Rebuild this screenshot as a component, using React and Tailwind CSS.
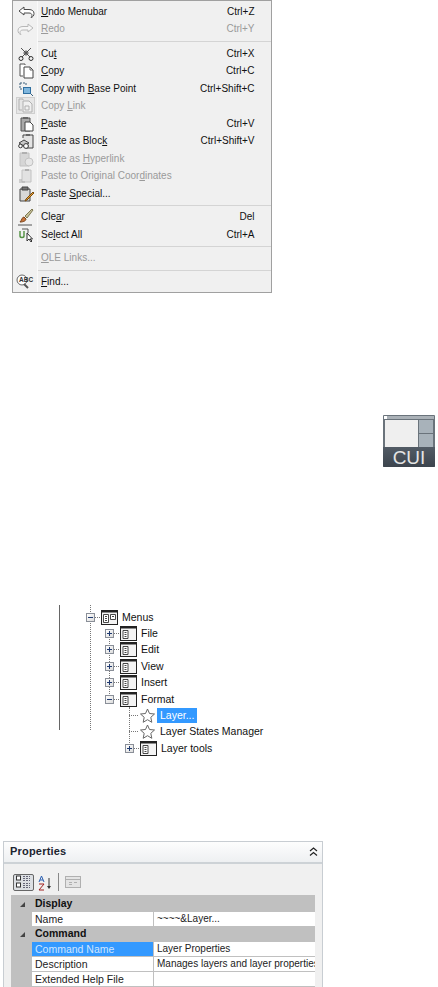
import React from "react";

const F = "font-['Liberation_Sans',Arial,sans-serif]";

const I = ({ children, w = 18, h = 16, dim }) => (
  <svg width={w} height={h} viewBox={`0 0 ${w} ${h}`} fill="none" className={dim ? "opacity-40" : ""}>{children}</svg>
);

const icons = {
  undo: (
    <I>
      <path d="M7 3 2 7l5 4V9h5c2 0 3 1 3 2.500 0 1-.5 1.500-1 2 2-.5 3-2 3-4 0-2.500-2-4-5-4H7z" stroke="#4a4a4a" fill="#fff" />
    </I>
  ),
  redo: (
    <I>
      <path d="M11 3l5 4-5 4V9H6c-2 0-3 1-3 2.500 0 1 .5 1.500 1 2-2-.5-3-2-3-4 0-2.500 2-4 5-4h5z" stroke="#b8b8b8" fill="#f6f6f6" />
    </I>
  ),
  cut: (
    <I>
      <path d="M4 2l9 9M14 2l-9 9" stroke="#555" />
      <circle cx="9" cy="7" r="2" stroke="#444" />
      <circle cx="4" cy="12.500" r="2" stroke="#333" />
      <circle cx="14" cy="12.500" r="2" stroke="#333" />
    </I>
  ),
  copy: (
    <I>
      <path d="M8 2V1H3v12h3" stroke="#555" fill="#fff" />
      <path d="M7 4h6l3 3v8H7z" stroke="#444" fill="#fff" />
      <path d="M13 4v3h3" stroke="#666" />
    </I>
  ),
  copyBase: (
    <I>
      <path d="M3 2h6v3M3 2v6h2" stroke="#3a5f7a" strokeDasharray="2 1" />
      <rect x="6.500" y="6.500" width="7" height="6" fill="#7fb6dd" stroke="#2f6fa0" />
      <path d="M14 13l2 2" stroke="#3a5f7a" />
    </I>
  ),
  copyLink: (
    <I w={20} h={18}>
      <rect x=".5" y=".5" width="18" height="16" fill="#e6e6e6" stroke="#cfcfcf" />
      <path d="M7 3V2H3v11h3" stroke="#b0b0b0" />
      <path d="M7 4h6l3 3v8H7z" stroke="#b0b0b0" fill="#f0f0f0" />
      <path d="M9 9h4v4H9z" stroke="#b0b0b0" />
    </I>
  ),
  paste: (
    <I>
      <path d="M4 2h9v13H4z" fill="#a9a9a9" stroke="#555" />
      <path d="M6 1h5v2H6z" fill="#666" />
      <path d="M8 6h5l3 3v6H8z" stroke="#444" fill="#fff" />
    </I>
  ),
  pasteBlock: (
    <I>
      <path d="M6 5V2h10v13H9" stroke="#444" fill="#e4e4e4" />
      <path d="M9 1h4v2H9z" fill="#666" />
      <path d="M2 10l5-3 5 3-5 3z" fill="#c8c8c8" stroke="#444" />
      <circle cx="3.500" cy="13" r="1.800" stroke="#333" fill="#fff" />
      <circle cx="9" cy="13" r="2.400" stroke="#333" fill="#fff" />
    </I>
  ),
  pasteLink: (
    <I>
      <path d="M3 2h9v13H3z" fill="#d6d6d6" stroke="#c2c2c2" />
      <path d="M5 1h5v2H5z" fill="#b0b0b0" />
      <circle cx="12" cy="11" r="4" fill="#e6e6e6" stroke="#c2c2c2" />
    </I>
  ),
  pasteOrig: (
    <I>
      <path d="M5 2h9v12H5z" fill="#e2e2e2" stroke="#c2c2c2" />
      <path d="M8 1h4v2H8z" fill="#b0b0b0" />
      <path d="M2 12h3M2 14h6" stroke="#aaa" />
    </I>
  ),
  pasteSpecial: (
    <I>
      <path d="M3 3h10v12H3z" fill="#d8d8d8" stroke="#444" />
      <path d="M5 1h6v3H5z" fill="#777" stroke="#444" />
      <path d="M9 13l7-7 1 1-7 7-2 1z" fill="#e8a23a" stroke="#7a4d10" />
    </I>
  ),
  clear: (
    <I h={18}>
      <path d="M15 1 8 8l2 2 6-8z" fill="#c6c09a" stroke="#7d7850" />
      <path d="M7 9c-2 0-2 3-4 5 3 0 6-1 6-3z" fill="#c7733a" stroke="#7a431a" />
      <path d="M1 17h14" stroke="#555" />
    </I>
  ),
  select: (
    <I>
      <path d="M3 4v5c0 2 4 2 4 0V4" stroke="#4f8f3f" strokeWidth="1.400" />
      <path d="M5 2h6v4" stroke="#555" />
      <path d="M10 6v8l2-2 2 3 1-1-2-2h2.500z" fill="#fff" stroke="#333" />
    </I>
  ),
  find: (
    <I w={20}>
      <circle cx="6" cy="6" r="5" stroke="#666" fill="#fff" />
      <text x="3" y="8" fontSize="6.500" fontWeight="700" fontFamily="Liberation Sans, sans-serif" fill="#333">ABC</text>
      <path d="M8 10l4 4" stroke="#555" strokeWidth="2" />
    </I>
  ),
};

const Row = ({ icon, label, shortcut, dim }) => (
  <div className={`flex h-[17.5px] items-center ${dim ? "text-[#9a9a9a]" : "text-[#111]"}`}>
    <div className="flex w-[25px] shrink-0 items-center justify-center">{icons[icon]}</div>
    <div className="ml-[3px] flex-1 whitespace-nowrap">{label}</div>
    <div className="mr-[16.5px] whitespace-nowrap">{shortcut}</div>
  </div>
);

const Sep = ({ h = 7 }) => (
  <div className="flex items-center" style={{ height: h }}>
    <div className="ml-[25px] h-px flex-1 bg-[#d4d4d4]" />
  </div>
);

function Menu() {
  return (
    <div className="ml-[12px] flex h-[293px] w-[260px] flex-col border border-[#a0a0a0] bg-[linear-gradient(90deg,#f1f1f1_0,#f1f1f1_24px,#fafafa_24px,#fafafa_25px,#f0f0f0_25px)] pt-[2px] text-[10px] leading-none">
      <Row icon="undo" label={<><u>U</u>ndo Menubar</>} shortcut="Ctrl+Z" />
      <Row icon="redo" dim label={<><u>R</u>edo</>} shortcut="Ctrl+Y" />
      <Sep />
      <Row icon="cut" label={<>Cu<u>t</u></>} shortcut="Ctrl+X" />
      <Row icon="copy" label={<><u>C</u>opy</>} shortcut="Ctrl+C" />
      <Row icon="copyBase" label={<>Copy with <u>B</u>ase Point</>} shortcut="Ctrl+Shift+C" />
      <Row icon="copyLink" dim label={<>Copy <u>L</u>ink</>} />
      <Row icon="paste" label={<><u>P</u>aste</>} shortcut="Ctrl+V" />
      <Row icon="pasteBlock" label={<>Paste as Bloc<u>k</u></>} shortcut="Ctrl+Shift+V" />
      <Row icon="pasteLink" dim label={<>Paste as <u>H</u>yperlink</>} />
      <Row icon="pasteOrig" dim label={<>Paste to Original Coor<u>d</u>inates</>} />
      <Row icon="pasteSpecial" label={<>Paste <u>S</u>pecial...</>} />
      <Sep h={6} />
      <Row icon="clear" label={<>Cle<u>a</u>r</>} shortcut="Del" />
      <Row icon="select" label={<>Se<u>l</u>ect All</>} shortcut="Ctrl+A" />
      <Sep h={6} />
      <Row dim label={<><u>O</u>LE Links...</>} />
      <Sep h={6} />
      <Row icon="find" label={<><u>F</u>ind...</>} />
    </div>
  );
}

function CuiIcon() {
  return (
    <div className="ml-[383px] mt-[122px] flex h-[52px] w-[52px] flex-col overflow-hidden rounded-[1px] bg-[#6a737b]">
      <div className="mx-px mt-px flex h-[3px] bg-[#aab1b7]"><div className="h-[3px] w-[3px] bg-white" /></div>
      <div className="mt-px flex h-[27px] gap-px px-[2px]">
        <div className="w-[33px] bg-[#efefef]" />
        <div className="flex flex-1 flex-col gap-px">
          <div className="flex-1 bg-[#a8b2ba]" />
          <div className="flex-1 bg-[#a8b2ba]" />
        </div>
      </div>
      <div className={`${F} flex flex-1 items-center justify-center bg-[linear-gradient(#525b65,#3c444d)] text-[19px] leading-none text-[#e4e4e4]`}>CUI</div>
    </div>
  );
}

const Box = ({ minus }) => (
  <div className="relative z-10 flex h-[9px] w-[9px] shrink-0 items-center justify-center border border-[#8a8f98] bg-[linear-gradient(135deg,#fff,#dcdcdc)]">
    <div className="h-px w-[5px] bg-[#1f3a70]" />
    {!minus && <div className="absolute h-[5px] w-px bg-[#1f3a70]" />}
  </div>
);

const MenuGlyph = ({ double }) => (
  <svg width="17" height="15" viewBox="0 0 17 15" fill="none">
    <rect x=".5" y=".5" width="16" height="14" fill="#f4f4f4" stroke="#222" />
    <rect x="0" y="0" width="17" height="2.500" fill="#222" />
    <path
      d={double ? "M2.500 4.500h5v8h-5zM4 6.500h2M4 8.500h2M4 10.500h2M9.500 4.500h5v5h-5zM11 6.500h2" : "M3 4.500h5v8H3zM4.500 6.500h2M4.500 8.500h2M4.500 10.500h2"}
      stroke="#333"
      fill="#fff"
      strokeWidth=".9"
    />
  </svg>
);

const Star = () => (
  <svg width="15" height="15" viewBox="0 0 15 15" fill="#fff" stroke="#666" className="mx-[1px]">
    <path d="M7.500 1l2 4.500 5 .5-3.700 3.300 1 5-4.300-2.600L3.200 14.300l1-5L.5 6l5-.5z" />
  </svg>
);

const Dash = ({ w }) => <div className="h-px shrink-0 border-t border-dotted border-[#777]" style={{ width: w }} />;

const TreeRow = ({ indent, minus, glyph, label, selected, double }) => (
  <div className="flex h-[16.4px] items-center" style={{ paddingLeft: indent }}>
    {minus !== undefined ? <Box minus={minus} /> : <Dash w={9} />}
    {minus !== undefined && <Dash w={5} />}
    <div className="ml-px flex items-center">{glyph === "star" ? <Star /> : <MenuGlyph double={double} />}</div>
    <span className={`ml-px whitespace-nowrap px-[3px] leading-[15px] ${selected ? "bg-[#3399ff] text-white" : "text-[#111]"}`}>{label}</span>
  </div>
);

function Tree() {
  return (
    <div className="relative ml-[59px] mt-[138px] w-[205px] overflow-hidden pt-[4px] text-[10.5px]">
      <div className="absolute left-0 top-0 h-[125px] border-l border-[#666]" />
      <div className="absolute left-[31px] top-0 h-[125px] border-l border-dotted border-[#777]" />
      <div className="absolute left-[50px] top-[24px] h-[75px] border-l border-dotted border-[#777]" />
      <div className="absolute left-[70px] top-[102px] h-[36px] border-l border-dotted border-[#777]" />
      <TreeRow indent={27} minus glyph="menu" double label="Menus" />
      <TreeRow indent={46} minus={false} glyph="menu" label="File" />
      <TreeRow indent={46} minus={false} glyph="menu" label="Edit" />
      <TreeRow indent={46} minus={false} glyph="menu" label="View" />
      <TreeRow indent={46} minus={false} glyph="menu" label="Insert" />
      <TreeRow indent={46} minus glyph="menu" label="Format" />
      <TreeRow indent={70} glyph="star" selected label="Layer..." />
      <TreeRow indent={70} glyph="star" label="Layer States Manager" />
      <TreeRow indent={66} minus={false} glyph="menu" label="Layer tools" />
    </div>
  );
}

const Section = ({ label }) => (
  <div className="relative flex h-[15px] items-center bg-[#c0c0c0] pl-[24px] text-[10.5px] font-bold text-[#111]">
    <span className="absolute left-[9px] top-[5px] h-0 w-0 border-b-[5px] border-l-[5px] border-b-[#444] border-l-transparent" />
    {label}
  </div>
);

const PropRow = ({ name, value, selected }) => (
  <div className="flex h-[15px] bg-[#c0c0c0] pl-[21px] text-[10.5px] leading-[14px]">
    <div className={`w-[121px] border-b border-[#c0c0c0] pl-[3px] ${selected ? "bg-[#3399ff] text-[#cfe6ff]" : "bg-white text-[#222]"}`}>{name}</div>
    <div className="ml-px flex-1 overflow-hidden whitespace-nowrap border-b border-[#c0c0c0] bg-white pl-[3px] text-[10px] text-[#222]">{value}</div>
  </div>
);

function Properties() {
  return (
    <div className="ml-[3px] mt-[84px] flex h-[146px] w-[320px] flex-col border-x border-t border-[#c8cdd2] bg-[#f0f0f0]">
      <div className="flex h-[22px] items-center justify-between border-b-2 border-[#cdd2d6] bg-[linear-gradient(#fdfdfd,#eef0f2)] pl-[6px] pr-[3px]">
        <span className="text-[11px] font-bold tracking-[.2px] text-[#1c2530]">Properties</span>
        <svg width="11" height="11" viewBox="0 0 11 11" fill="none" stroke="#222" strokeWidth="1.200">
          <path d="M2 5l3.500-3L9 5M2 9.500l3.500-3 3.500 3" />
        </svg>
      </div>
      <div className="flex h-[31px] items-end pb-[4px] pl-[9px]">
        <div className="flex h-[17px] w-[21px] items-center justify-center rounded-[2px] border border-[#666] bg-[#dcdfe3]">
          <svg width="15" height="14" viewBox="0 0 15 14" fill="none" stroke="#333">
            <rect x=".5" y="1" width="4" height="4" fill="#fff" />
            <rect x=".5" y="8" width="4" height="4" fill="#fff" />
            <path d="M7 1.500h7M7 3.500h7M7 5.500h7M7 8.500h7M7 10.500h7M7 12.500h7" stroke="#667" strokeDasharray="2 1" />
          </svg>
        </div>
        <svg width="18" height="16" viewBox="0 0 18 16" fill="none" className="ml-[3px]">
          <path d="M2 7l2.500-6L7 7M3 5h3" stroke="#2a5fb0" />
          <path d="M2 9h5l-5 6h5" stroke="#a02020" />
          <path d="M12 3v9" stroke="#333" />
          <path d="M10 11h4l-2 3z" fill="#333" />
        </svg>
        <div className="ml-[3px] h-[18px] w-px bg-[#888]" />
        <svg width="16" height="14" viewBox="0 0 16 14" fill="#e4e4e4" stroke="#b0b0b0" className="ml-[6px] mb-[2px]">
          <rect x=".5" y="1.500" width="15" height="11" />
          <path d="M.5 4.500h15M4 7.500h3M4 9.500h3M9 7.500h3" />
        </svg>
      </div>
      <div className="mx-[7px] flex flex-1 flex-col border-t-2 border-[#c0c0c0] bg-[#c0c0c0]">
        <Section label="Display" />
        <PropRow name="Name" value="~~~~&Layer..." />
        <Section label="Command" />
        <PropRow name="Command Name" value="Layer Properties" selected />
        <PropRow name="Description" value="Manages layers and layer properties" />
        <PropRow name="Extended Help File" value="" />
      </div>
    </div>
  );
}

export default function App() {
  return (
    <div className={`${F} h-[987px] w-[438px] overflow-hidden bg-white`}>
      <Menu />
      <CuiIcon />
      <Tree />
      <Properties />
    </div>
  );
}
